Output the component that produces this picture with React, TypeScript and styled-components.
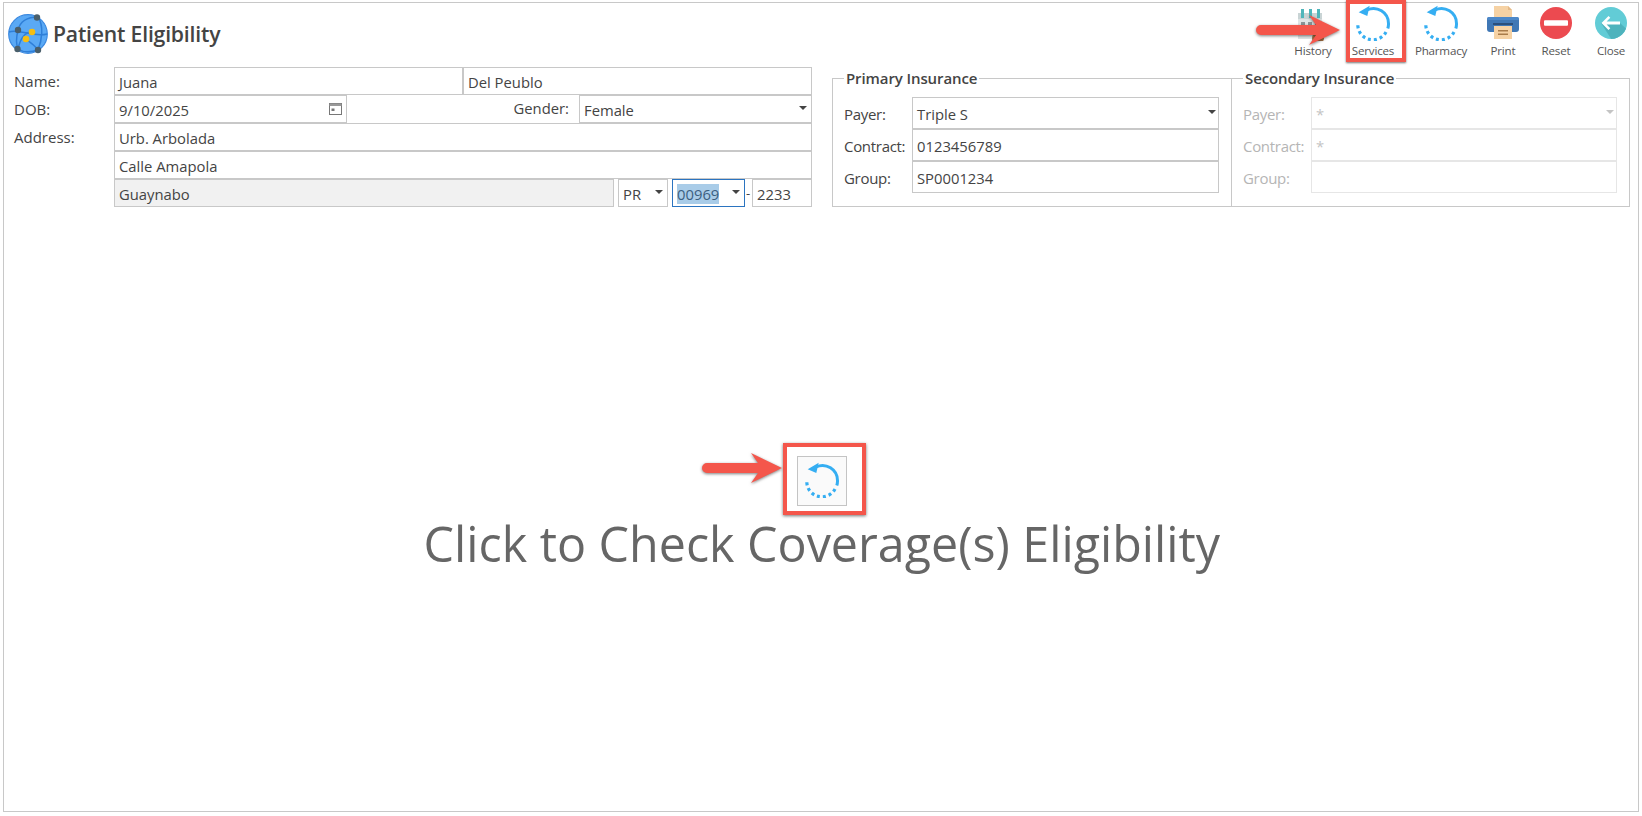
import React from "react";
import styled, { createGlobalStyle } from "styled-components";

const Global = createGlobalStyle`
  html, body { margin: 0; padding: 0; background: #fff; }
  body { font-family: "Open Sans", "Noto Sans", sans-serif; color: #444; overflow: hidden; }
  * { box-sizing: border-box; }
`;

const Frame = styled.div`
  position: relative;
  margin: 2px 3px 0 3px;
  height: 810px;
  border: 1px solid #c8c8c8;
  display: flex;
  flex-direction: column;
`;

const Header = styled.header`
  height: 64px;
  display: flex;
  justify-content: space-between;
`;

const TitleBlock = styled.div`
  display: flex;
  align-items: center;
  gap: 5px;
  padding: 4px 0 0 4px;
  height: 58px;
`;

const Title = styled.h1`
  margin: -2px 0 0 0;
  font-size: 21.2px;
  font-weight: 600;
  color: #444;
  letter-spacing: -0.2px;
`;

const Toolbar = styled.div`
  display: flex;
  height: 60px;
`;

const ToolButton = styled.div<{ $w: number }>`
  position: relative;
  width: ${(p) => p.$w}px;
  display: flex;
  flex-direction: column;
  align-items: center;
  justify-content: flex-end;
  padding-bottom: 4px;
`;

const ToolIcon = styled.div<{ $dx?: number }>`
  position: absolute;
  top: 2px;
  left: calc(50% + ${(p) => p.$dx || 0}px);
  transform: translateX(-50%);
  width: 36px;
  height: 36px;
  line-height: 0;
`;

const ToolLabel = styled.span`
  font-size: 11.6px;
  line-height: 16px;
  color: #555;
  white-space: nowrap;
  letter-spacing: -0.2px;
`;

const RedBoxTop = styled.div`
  position: absolute;
  left: 4px;
  top: -3px;
  width: 60px;
  height: 62px;
  border: 4px solid #f4564b;
  box-shadow: 0 1px 2px rgba(0, 0, 0, 0.55);
`;

const ArrowTop = styled.div`
  position: absolute;
  left: -85px;
  top: 9px;
  width: 84px;
  height: 36px;
  line-height: 0;
`;

const FormArea = styled.div`
  display: flex;
  gap: 20px;
  padding: 0 6px 0 10px;
`;

const PatientForm = styled.div`
  width: 798px;
  flex: none;
  display: flex;
  flex-direction: column;
`;

const Row = styled.div`
  display: flex;
  align-items: stretch;
  height: 28px;
`;

const RowLabel = styled.label`
  width: 100px;
  flex: none;
  font-size: 15px;
  line-height: 29px;
  color: #444;
`;

const Field = styled.div<{ $w?: number; $bg?: string; $grow?: boolean; $focus?: boolean; $ml?: number }>`
  position: relative;
  ${(p) => (p.$grow ? "flex: 1;" : `flex: none; width: ${p.$w}px;`)}
  ${(p) => (p.$ml ? `margin-left: ${p.$ml}px;` : "")}
  border: 1px solid ${(p) => (p.$focus ? "#2b74c0" : "#c8c8c8")};
  background: ${(p) => p.$bg || "#fff"};
  display: flex;
  align-items: center;
  justify-content: space-between;
  padding: 2px 4px 0 4px;
  font-size: 14.8px;
  color: #444;
  white-space: nowrap;
`;

const Caret = styled.span<{ $light?: boolean }>`
  width: 0;
  height: 0;
  border-left: 4px solid transparent;
  border-right: 4px solid transparent;
  border-top: 4px solid ${(p) => (p.$light ? "#c4c4c4" : "#444")};
  margin: -5px 0 0 0;
`;

const Selected = styled.span`
  background: #a9cce8;
  color: #3c5f80;
`;

const InlineLabel = styled.span`
  flex: 1;
  text-align: right;
  padding-right: 10px;
  font-size: 14.8px;
  line-height: 27px;
  color: #444;
`;

const Dash = styled.span`
  width: 7px;
  flex: none;
  font-size: 13px;
  line-height: 28px;
  text-align: left;
  padding-left: 1px;
`;

const CalendarGlyph = styled.svg`
  margin-top: -4px;
`;

const Insurance = styled.div`
  display: flex;
  flex: none;
  width: 798px;
`;

const Group = styled.fieldset<{ $off?: boolean }>`
  margin: 0;
  width: 400px;
  height: 140px;
  min-width: 0;
  padding: 8px 12px 0 11px;
  border: 1px solid #c8c8c8;
  color: ${(p) => (p.$off ? "#b5b5b5" : "#444")};
  & + & {
    margin-left: -1px;
    width: 399px;
  }
`;

const Legend = styled.legend`
  font-size: 15px;
  font-weight: 600;
  line-height: 22px;
  padding: 0 2px;
  color: #444;
  letter-spacing: -0.1px;
`;

const InsRow = styled.div`
  display: flex;
  height: 32px;
`;

const InsLabel = styled.label`
  width: 68px;
  flex: none;
  font-size: 15px;
  line-height: 34px;
  color: inherit;
  white-space: nowrap;
  letter-spacing: -0.3px;
`;

const InsField = styled.div<{ $off?: boolean }>`
  flex: 1;
  border: 1px solid ${(p) => (p.$off ? "#e6e6e6" : "#c8c8c8")};
  display: flex;
  align-items: center;
  justify-content: space-between;
  padding: 2px 2px 0 4px;
  font-size: 14.8px;
  color: ${(p) => (p.$off ? "#c4c4c4" : "#444")};
`;

const Center = styled.main`
  flex: 1;
  display: flex;
  flex-direction: column;
  align-items: center;
  padding: 249px 0 0 1.5px;
`;

const CheckWrap = styled.div`
  position: relative;
  width: 50px;
  height: 50px;
`;

const CheckButton = styled.button`
  width: 50px;
  height: 50px;
  padding: 0 0 2px 0;
  border: 1px solid #c4c4c4;
  background: #fafafa;
  line-height: 0;
  display: flex;
  align-items: center;
  justify-content: center;
`;

const RedBoxCenter = styled.div`
  position: absolute;
  left: -14px;
  top: -13px;
  width: 83px;
  height: 72px;
  border: 4px solid #f4564b;
  box-shadow: 0 1px 3px rgba(0, 0, 0, 0.55);
`;

const ArrowCenter = styled.div`
  position: absolute;
  left: -94px;
  top: -6px;
  width: 80px;
  height: 36px;
  line-height: 0;
`;

const Message = styled.div`
  margin-top: 5px;
  font-size: 48.4px;
  line-height: 64px;
  color: #666;
  font-weight: 400;
  white-space: nowrap;
`;

const ArrowSvg = styled.svg`
  overflow: visible;
  filter: drop-shadow(0 1.5px 1.5px rgba(0, 0, 0, 0.5));
`;

const Logo = () => (
  <svg width="40" height="40" viewBox="0 0 40 40">
    <circle cx="20" cy="20" r="19.3" fill="#5aa9f5" stroke="#3d8ae0" strokeWidth="1.2" />
    <g fill="none" stroke="#2f7fd8" strokeWidth="1.5">
      <path d="M1 18 C10 14 26 24 39 20" />
      <path d="M10 16 C12 8 18 3 30 3" />
      <path d="M30 3 C36 12 34 26 30 36" />
      <path d="M10 35 C12 26 16 18 24 18" />
      <path d="M10 16 C8 24 8 30 10 35" />
      <path d="M10 35 C16 39 24 38 30 36" />
      <path d="M18 25 C24 30 28 32 30 36" />
    </g>
    <circle cx="29" cy="3.5" r="3.2" fill="#4a5f6b" />
    <circle cx="10" cy="16" r="3.2" fill="#4a5f6b" />
    <circle cx="9.5" cy="35" r="3.2" fill="#4a5f6b" />
    <circle cx="30" cy="36" r="3.2" fill="#4a5f6b" />
    <circle cx="24" cy="18" r="3.3" fill="#f5be12" />
    <circle cx="18" cy="25" r="3.3" fill="#f5be12" />
  </svg>
);

const RefreshIcon = ({ size = 36 }: { size?: number }) => (
  <svg width={size} height={size} viewBox="0 0 36 36">
    <path d="M12 5 A15 15 0 0 1 33.5 18.5 A15 15 0 0 1 32.8 23.5" fill="none" stroke="#35aef2" strokeWidth="3" />
    <path d="M31 27 A15 15 0 0 1 3 17.5" fill="none" stroke="#35aef2" strokeWidth="3.2" strokeDasharray="3 3" />
    <path d="M3.7 7.3 L14.7 0.7 L12.3 11 Z" fill="#35aef2" />
  </svg>
);

const HistoryIcon = () => (
  <svg width="36" height="36" viewBox="0 0 36 36">
    <rect x="6" y="8" width="24" height="26" fill="#dfe5e6" />
    <rect x="6" y="8" width="24" height="6" fill="#c9d4d5" />
    <rect x="9" y="4" width="3" height="9" fill="#4fb6bb" />
    <rect x="17" y="4" width="3" height="9" fill="#4fb6bb" />
    <rect x="25" y="4" width="3" height="9" fill="#4fb6bb" />
    <rect x="9" y="17" width="4" height="4" fill="#8a9496" />
    <rect x="16" y="17" width="4" height="4" fill="#8a9496" />
    <rect x="23" y="17" width="4" height="4" fill="#8a9496" />
    <circle cx="26" cy="33" r="6" fill="#a87345" />
  </svg>
);

const PrintIcon = () => (
  <svg width="36" height="36" viewBox="0 0 36 36">
    <path d="M9 1 H23 L27 5 V15 H9 Z" fill="#f6d2a4" />
    <path d="M23 1 L27 5 H23 Z" fill="#e4b988" />
    <rect x="2" y="12" width="32" height="15" rx="3" fill="#3f77b5" />
    <rect x="2" y="12" width="32" height="3" rx="1.5" fill="#4d88c8" />
    <rect x="8" y="18" width="20" height="2" fill="#2a4f7c" />
    <path d="M9 21 H27 V34 H9 Z" fill="#f6d2a4" />
    <rect x="13" y="25" width="10" height="1.5" fill="#a97c4a" />
    <rect x="13" y="28.5" width="10" height="1.5" fill="#a97c4a" />
  </svg>
);

const ResetIcon = () => (
  <svg width="36" height="36" viewBox="0 0 36 36">
    <circle cx="18" cy="18" r="16" fill="#ec4a50" />
    <rect x="6" y="15.2" width="24" height="5.6" rx="1" fill="#fff" />
  </svg>
);

const CloseIcon = () => (
  <svg width="36" height="36" viewBox="0 0 36 36">
    <defs>
      <clipPath id="cl"><circle cx="18" cy="18" r="16" /></clipPath>
    </defs>
    <circle cx="18" cy="18" r="16" fill="#62ccd6" />
    <path d="M8 18 L27 18 L40 30 L22 40 Z" fill="#4cb0ba" clipPath="url(#cl)" opacity="0.9" />
    <path d="M8.5 18 L15.5 11 L17.3 12.8 L13.6 16.6 H27 V19.4 H13.6 L17.3 23.2 L15.5 25 Z" fill="#fff" />
  </svg>
);

const ArrowShape = ({ w, h }: { w: number; h: number }) => (
  <ArrowSvg width={w} height={h} viewBox={`0 0 ${w} ${h}`}>
    <path
      d={`M4 ${h / 2 - 5} H${w - 25} L${w - 32} ${h / 2 - 15} L${w - 1} ${h / 2} L${w - 32} ${h / 2 + 15} L${w - 25} ${h / 2 + 5} H4 A5 5 0 0 1 4 ${h / 2 - 5} Z`}
      fill="#f4564b"
    />
  </ArrowSvg>
);

export default function App() {
  return (
    <>
      <Global />
      <Frame>
        <Header>
          <TitleBlock>
            <Logo />
            <Title>Patient Eligibility</Title>
          </TitleBlock>
          <Toolbar>
            <ToolButton $w={58}>
              <ToolIcon $dx={-3}><HistoryIcon /></ToolIcon>
              <ToolLabel>History</ToolLabel>
            </ToolButton>
            <ToolButton $w={62}>
              <ToolIcon><RefreshIcon /></ToolIcon>
              <ToolLabel>Services</ToolLabel>
              <RedBoxTop />
              <ArrowTop><ArrowShape w={84} h={36} /></ArrowTop>
            </ToolButton>
            <ToolButton $w={74}>
              <ToolIcon><RefreshIcon /></ToolIcon>
              <ToolLabel>Pharmacy</ToolLabel>
            </ToolButton>
            <ToolButton $w={50}>
              <ToolIcon><PrintIcon /></ToolIcon>
              <ToolLabel>Print</ToolLabel>
            </ToolButton>
            <ToolButton $w={56}>
              <ToolIcon><ResetIcon /></ToolIcon>
              <ToolLabel>Reset</ToolLabel>
            </ToolButton>
            <ToolButton $w={54}>
              <ToolIcon><CloseIcon /></ToolIcon>
              <ToolLabel>Close</ToolLabel>
            </ToolButton>
          </Toolbar>
        </Header>
        <FormArea>
          <PatientForm>
            <Row>
              <RowLabel>Name:</RowLabel>
              <Field $w={349}>Juana</Field>
              <Field $grow>Del Peublo</Field>
            </Row>
            <Row>
              <RowLabel>DOB:</RowLabel>
              <Field $w={233}>
                9/10/2025
                <CalendarGlyph width="13" height="13" viewBox="0 0 13 13">
                  <rect x="0.5" y="1.5" width="12" height="11" fill="none" stroke="#777" />
                  <rect x="0.5" y="1.5" width="12" height="2.5" fill="#999" />
                  <rect x="2.5" y="6.5" width="3" height="2.5" fill="#777" />
                </CalendarGlyph>
              </Field>
              <InlineLabel>Gender:</InlineLabel>
              <Field $w={233}>
                Female
                <Caret />
              </Field>
            </Row>
            <Row>
              <RowLabel>Address:</RowLabel>
              <Field $grow>Urb. Arbolada</Field>
            </Row>
            <Row>
              <RowLabel />
              <Field $grow>Calle Amapola</Field>
            </Row>
            <Row>
              <RowLabel />
              <Field $w={500} $bg="#f1f1f1">Guaynabo</Field>
              <Field $w={50} $ml={4}>
                PR
                <Caret />
              </Field>
              <Field $w={73} $ml={4} $focus>
                <Selected>00969</Selected>
                <Caret />
              </Field>
              <Dash>-</Dash>
              <Field $grow>2233</Field>
            </Row>
          </PatientForm>
          <Insurance>
            <Group>
              <Legend>Primary Insurance</Legend>
              <InsRow>
                <InsLabel>Payer:</InsLabel>
                <InsField>Triple S<Caret /></InsField>
              </InsRow>
              <InsRow>
                <InsLabel>Contract:</InsLabel>
                <InsField>0123456789</InsField>
              </InsRow>
              <InsRow>
                <InsLabel>Group:</InsLabel>
                <InsField>SP0001234</InsField>
              </InsRow>
            </Group>
            <Group $off>
              <Legend>Secondary Insurance</Legend>
              <InsRow>
                <InsLabel>Payer:</InsLabel>
                <InsField $off>*<Caret $light /></InsField>
              </InsRow>
              <InsRow>
                <InsLabel>Contract:</InsLabel>
                <InsField $off>*</InsField>
              </InsRow>
              <InsRow>
                <InsLabel>Group:</InsLabel>
                <InsField $off />
              </InsRow>
            </Group>
          </Insurance>
        </FormArea>
        <Center>
          <CheckWrap>
            <CheckButton><RefreshIcon /></CheckButton>
            <RedBoxCenter />
            <ArrowCenter><ArrowShape w={80} h={36} /></ArrowCenter>
          </CheckWrap>
          <Message>Click to Check Coverage(s) Eligibility</Message>
        </Center>
      </Frame>
    </>
  );
}
